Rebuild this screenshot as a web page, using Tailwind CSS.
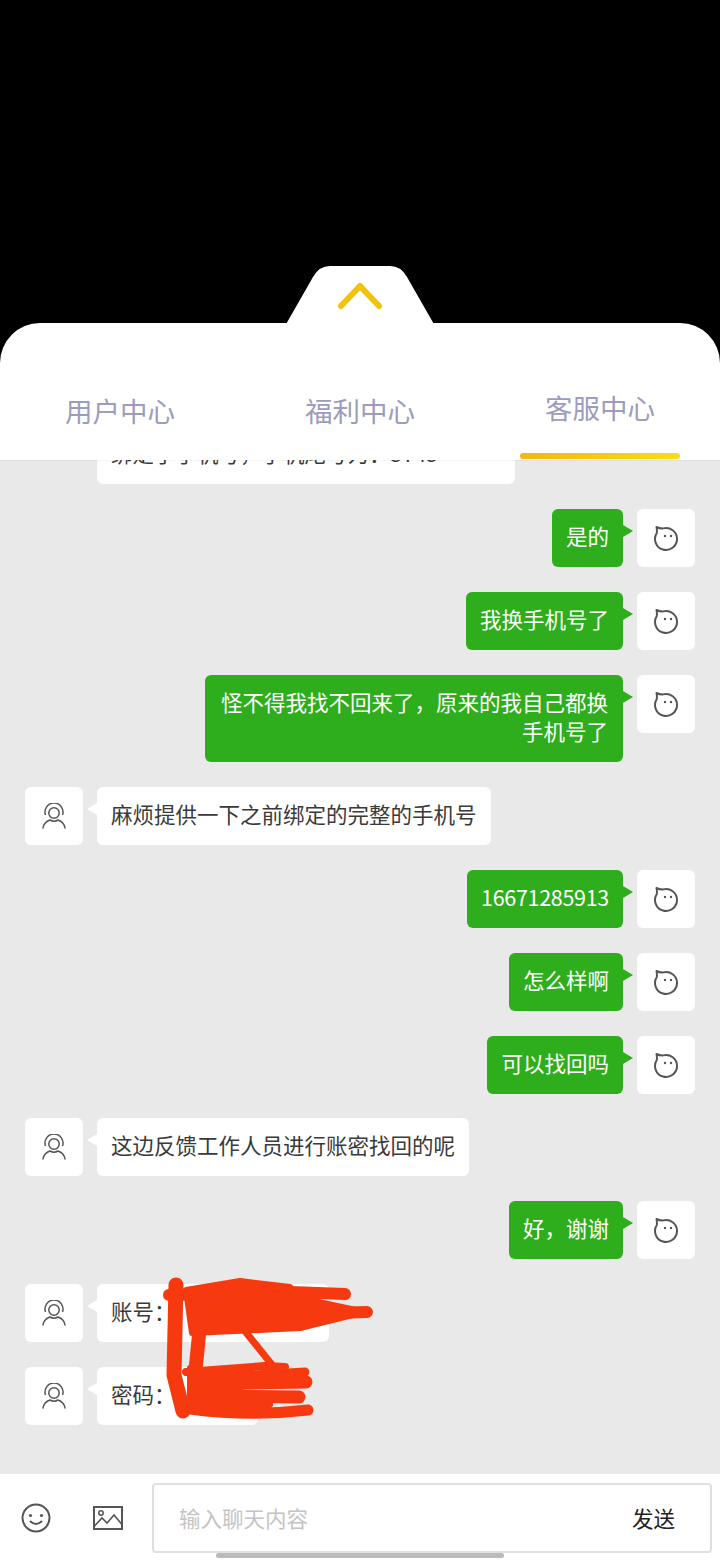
<!DOCTYPE html>
<html lang="zh">
<head>
<meta charset="utf-8">
<script src="https://cdn.jsdelivr.net/npm/@tailwindcss/browser@4"></script>
</head>
<body class="bg-black">
<div class="relative flex flex-col w-[720px] h-[1560px] overflow-hidden bg-black font-['Noto_Sans_CJK_SC','Noto_Sans',sans-serif] font-normal">
  <div class="relative h-[323px] shrink-0">
    <svg class="absolute left-[280px] top-[266px] w-[160px] h-[60px]" viewBox="0 0 160 60">
      <path d="M5 60 L33 11 Q39 0 50 0 L110 0 Q121 0 127 11 L155 60 Z" fill="#fff"/>
      <path d="M61 40 L80 20 L99 40" fill="none" stroke="#f0c30f" stroke-width="6" stroke-linecap="round" stroke-linejoin="round"/>
    </svg>
  </div>
  <header class="relative z-10 h-[137px] shrink-0 bg-white rounded-t-[40px] grid grid-cols-3 text-[27.5px] leading-[40px] text-[#9c9cbc] shadow-[0_1px_1px_rgba(0,0,0,0.04)]">
    <div class="flex justify-center pt-[67px]">用户中心</div>
    <div class="flex justify-center pt-[67px]">福利中心</div>
    <div class="relative flex justify-center pt-[64px]">客服中心
      <div class="absolute left-[40px] bottom-[1px] w-[160px] h-[6px] rounded-full bg-gradient-to-r from-[#eeb911] to-[#fbdc14]"></div>
    </div>
  </header>
  <main class="flex-1 overflow-hidden bg-[#e9e9e9] px-[25px] text-[21.5px] leading-[29.5px] text-[#3a3a3a]">
    <div class="flex flex-col gap-[24.9px] -mt-[33.7px]">

      <div class="flex gap-[14px] items-start">
        <div class="w-[58px] h-[58px] shrink-0"></div>
        <div class="relative bg-white rounded-[6px] px-[14px] pt-[12px] pb-[16.5px] whitespace-nowrap w-[418px]">绑定了手机号，手机尾号为：5745</div>
      </div>

      <div class="flex gap-[14px] justify-end items-start">
        <div class="relative bg-[#2eae1c] text-white rounded-[6px] px-[14px] pt-[12px] pb-[16.5px]">是的
          <span class="absolute left-full top-[16px] border-y-[6px] border-y-transparent border-l-[10px] border-l-[#2eae1c]"></span></div>
        <div class="w-[58px] h-[58px] shrink-0 bg-white rounded-[6px] flex items-center justify-center">
          <svg class="w-[28px] h-[28px]" viewBox="0 0 28 28" fill="none" stroke="#555" stroke-width="2" stroke-linejoin="round"><path d="M4.8 9 A11 11 0 1 0 11 4.4 Q7.5 4.5 4.5 3 Q5.2 6 4.8 9 Z"/><circle cx="13" cy="12" r="1.2" fill="#555" stroke="none"/><circle cx="19" cy="12" r="1.2" fill="#555" stroke="none"/></svg>
        </div>
      </div>

      <div class="flex gap-[14px] justify-end items-start">
        <div class="relative bg-[#2eae1c] text-white rounded-[6px] px-[14px] pt-[12px] pb-[16.5px]">我换手机号了
          <span class="absolute left-full top-[16px] border-y-[6px] border-y-transparent border-l-[10px] border-l-[#2eae1c]"></span></div>
        <div class="w-[58px] h-[58px] shrink-0 bg-white rounded-[6px] flex items-center justify-center">
          <svg class="w-[28px] h-[28px]" viewBox="0 0 28 28" fill="none" stroke="#555" stroke-width="2" stroke-linejoin="round"><path d="M4.8 9 A11 11 0 1 0 11 4.4 Q7.5 4.5 4.5 3 Q5.2 6 4.8 9 Z"/><circle cx="13" cy="12" r="1.2" fill="#555" stroke="none"/><circle cx="19" cy="12" r="1.2" fill="#555" stroke="none"/></svg>
        </div>
      </div>

      <div class="flex gap-[14px] justify-end items-start">
        <div class="relative bg-[#2eae1c] text-white rounded-[6px] px-[15px] pt-[12px] pb-[16px] w-[418px] text-right">怪不得我找不回来了，原来的我自己都换手机号了
          <span class="absolute left-full top-[16px] border-y-[6px] border-y-transparent border-l-[10px] border-l-[#2eae1c]"></span></div>
        <div class="w-[58px] h-[58px] shrink-0 bg-white rounded-[6px] flex items-center justify-center">
          <svg class="w-[28px] h-[28px]" viewBox="0 0 28 28" fill="none" stroke="#555" stroke-width="2" stroke-linejoin="round"><path d="M4.8 9 A11 11 0 1 0 11 4.4 Q7.5 4.5 4.5 3 Q5.2 6 4.8 9 Z"/><circle cx="13" cy="12" r="1.2" fill="#555" stroke="none"/><circle cx="19" cy="12" r="1.2" fill="#555" stroke="none"/></svg>
        </div>
      </div>

      <div class="flex gap-[14px] items-start">
        <div class="w-[58px] h-[58px] shrink-0 bg-white rounded-[6px] flex items-center justify-center">
          <svg class="w-[26px] h-[26px]" viewBox="0 0 26 26" fill="none" stroke="#555" stroke-width="1.5"><circle cx="13" cy="10" r="5.2"/><path d="M4.5 12 A9 9 0 1 1 21.5 12"/><path d="M2 25 Q3 19 9 17 Q13 19.5 17 17 Q23 19 24 25" stroke-linecap="round"/></svg>
        </div>
        <div class="relative bg-white rounded-[6px] px-[14px] pt-[12px] pb-[16.5px]">麻烦提供一下之前绑定的完整的手机号
          <span class="absolute right-full top-[16px] border-y-[6px] border-y-transparent border-r-[10px] border-r-white"></span></div>
      </div>

      <div class="flex gap-[14px] justify-end items-start">
        <div class="relative bg-[#2eae1c] text-white rounded-[6px] px-[14px] pt-[12px] pb-[16.5px] tracking-[-0.3px]">16671285913
          <span class="absolute left-full top-[16px] border-y-[6px] border-y-transparent border-l-[10px] border-l-[#2eae1c]"></span></div>
        <div class="w-[58px] h-[58px] shrink-0 bg-white rounded-[6px] flex items-center justify-center">
          <svg class="w-[28px] h-[28px]" viewBox="0 0 28 28" fill="none" stroke="#555" stroke-width="2" stroke-linejoin="round"><path d="M4.8 9 A11 11 0 1 0 11 4.4 Q7.5 4.5 4.5 3 Q5.2 6 4.8 9 Z"/><circle cx="13" cy="12" r="1.2" fill="#555" stroke="none"/><circle cx="19" cy="12" r="1.2" fill="#555" stroke="none"/></svg>
        </div>
      </div>

      <div class="flex gap-[14px] justify-end items-start">
        <div class="relative bg-[#2eae1c] text-white rounded-[6px] px-[14px] pt-[12px] pb-[16.5px]">怎么样啊
          <span class="absolute left-full top-[16px] border-y-[6px] border-y-transparent border-l-[10px] border-l-[#2eae1c]"></span></div>
        <div class="w-[58px] h-[58px] shrink-0 bg-white rounded-[6px] flex items-center justify-center">
          <svg class="w-[28px] h-[28px]" viewBox="0 0 28 28" fill="none" stroke="#555" stroke-width="2" stroke-linejoin="round"><path d="M4.8 9 A11 11 0 1 0 11 4.4 Q7.5 4.5 4.5 3 Q5.2 6 4.8 9 Z"/><circle cx="13" cy="12" r="1.2" fill="#555" stroke="none"/><circle cx="19" cy="12" r="1.2" fill="#555" stroke="none"/></svg>
        </div>
      </div>

      <div class="flex gap-[14px] justify-end items-start">
        <div class="relative bg-[#2eae1c] text-white rounded-[6px] px-[14px] pt-[12px] pb-[16.5px]">可以找回吗
          <span class="absolute left-full top-[16px] border-y-[6px] border-y-transparent border-l-[10px] border-l-[#2eae1c]"></span></div>
        <div class="w-[58px] h-[58px] shrink-0 bg-white rounded-[6px] flex items-center justify-center">
          <svg class="w-[28px] h-[28px]" viewBox="0 0 28 28" fill="none" stroke="#555" stroke-width="2" stroke-linejoin="round"><path d="M4.8 9 A11 11 0 1 0 11 4.4 Q7.5 4.5 4.5 3 Q5.2 6 4.8 9 Z"/><circle cx="13" cy="12" r="1.2" fill="#555" stroke="none"/><circle cx="19" cy="12" r="1.2" fill="#555" stroke="none"/></svg>
        </div>
      </div>

      <div class="flex gap-[14px] items-start">
        <div class="w-[58px] h-[58px] shrink-0 bg-white rounded-[6px] flex items-center justify-center">
          <svg class="w-[26px] h-[26px]" viewBox="0 0 26 26" fill="none" stroke="#555" stroke-width="1.5"><circle cx="13" cy="10" r="5.2"/><path d="M4.5 12 A9 9 0 1 1 21.5 12"/><path d="M2 25 Q3 19 9 17 Q13 19.5 17 17 Q23 19 24 25" stroke-linecap="round"/></svg>
        </div>
        <div class="relative bg-white rounded-[6px] px-[14px] pt-[12px] pb-[16.5px]">这边反馈工作人员进行账密找回的呢
          <span class="absolute right-full top-[16px] border-y-[6px] border-y-transparent border-r-[10px] border-r-white"></span></div>
      </div>

      <div class="flex gap-[14px] justify-end items-start">
        <div class="relative bg-[#2eae1c] text-white rounded-[6px] px-[14px] pt-[12px] pb-[16.5px]">好，谢谢
          <span class="absolute left-full top-[16px] border-y-[6px] border-y-transparent border-l-[10px] border-l-[#2eae1c]"></span></div>
        <div class="w-[58px] h-[58px] shrink-0 bg-white rounded-[6px] flex items-center justify-center">
          <svg class="w-[28px] h-[28px]" viewBox="0 0 28 28" fill="none" stroke="#555" stroke-width="2" stroke-linejoin="round"><path d="M4.8 9 A11 11 0 1 0 11 4.4 Q7.5 4.5 4.5 3 Q5.2 6 4.8 9 Z"/><circle cx="13" cy="12" r="1.2" fill="#555" stroke="none"/><circle cx="19" cy="12" r="1.2" fill="#555" stroke="none"/></svg>
        </div>
      </div>

      <div class="flex gap-[14px] items-start">
        <div class="w-[58px] h-[58px] shrink-0 bg-white rounded-[6px] flex items-center justify-center">
          <svg class="w-[26px] h-[26px]" viewBox="0 0 26 26" fill="none" stroke="#555" stroke-width="1.5"><circle cx="13" cy="10" r="5.2"/><path d="M4.5 12 A9 9 0 1 1 21.5 12"/><path d="M2 25 Q3 19 9 17 Q13 19.5 17 17 Q23 19 24 25" stroke-linecap="round"/></svg>
        </div>
        <div class="relative bg-white rounded-[6px] px-[14px] pt-[12px] pb-[16.5px] w-[232px]">账号：
          <span class="absolute right-full top-[16px] border-y-[6px] border-y-transparent border-r-[10px] border-r-white"></span></div>
      </div>

      <div class="flex gap-[14px] items-start">
        <div class="w-[58px] h-[58px] shrink-0 bg-white rounded-[6px] flex items-center justify-center">
          <svg class="w-[26px] h-[26px]" viewBox="0 0 26 26" fill="none" stroke="#555" stroke-width="1.5"><circle cx="13" cy="10" r="5.2"/><path d="M4.5 12 A9 9 0 1 1 21.5 12"/><path d="M2 25 Q3 19 9 17 Q13 19.5 17 17 Q23 19 24 25" stroke-linecap="round"/></svg>
        </div>
        <div class="relative bg-white rounded-[6px] px-[14px] pt-[12px] pb-[16.5px] w-[161px]">密码：
          <span class="absolute right-full top-[16px] border-y-[6px] border-y-transparent border-r-[10px] border-r-white"></span></div>
      </div>
    </div>
  </main>
  <footer class="h-[86px] shrink-0 bg-white flex items-start pt-[9px] pr-[8px]">
    <div class="w-[72px] h-[70px] flex items-center justify-center">
      <svg class="w-[30px] h-[30px]" viewBox="0 0 30 30" fill="none" stroke="#555" stroke-width="2"><circle cx="15" cy="15" r="13.5"/><circle cx="9.5" cy="12.5" r="1.6" fill="#555" stroke="none"/><circle cx="20.5" cy="12.5" r="1.6" fill="#555" stroke="none"/><path d="M9.5 18.5 Q15 23.5 20.5 18.5" stroke-linecap="round"/></svg>
    </div>
    <div class="w-[72px] h-[70px] flex items-center justify-center">
      <svg class="w-[30px] h-[24px]" viewBox="0 0 30 24" fill="none" stroke="#555" stroke-width="2"><rect x="1" y="1" width="28" height="22"/><circle cx="8" cy="7" r="2.2" stroke-width="1.5"/><path d="M1.5 20 L9 12 L14 17 L21 9 L28.5 18" stroke-width="1.6"/></svg>
    </div>
    <div class="ml-[8px] flex-1 h-[70px] border-2 border-[#e0e0e0] rounded-[4px] flex items-center justify-between pl-[25px] pr-[35px]">
      <span class="text-[21.5px] text-[#c4c4c4]">输入聊天内容</span>
      <span class="text-[21.5px] text-[#222]">发送</span>
    </div>
  </footer>
  <div class="absolute left-[216px] bottom-[2px] w-[288px] h-[5px] bg-[#bbb] rounded-full"></div>
  <svg class="absolute left-0 top-0 w-[720px] h-[1560px] pointer-events-none" viewBox="0 0 720 1560" fill="none" stroke="#f7390f" stroke-linecap="round" stroke-linejoin="round">
    <path d="M186 1290 L240 1281 L290 1287 L300 1298 L365 1312 L300 1328 L192 1333 Z" fill="#f7390f" stroke-width="6"/>
    <path d="M169 1295 L290 1292 L345 1294" stroke-width="12"/>
    <path d="M300 1314 L367 1312" stroke-width="12"/>
    <path d="M176 1285 L174 1375 L183 1411" stroke-width="15"/>
    <path d="M200 1325 L195 1375" stroke-width="14"/>
    <path d="M240 1325 L273 1366" stroke-width="7"/>
    <path d="M186 1372 L265 1366 L285 1367" stroke-width="8"/>
    <path d="M190 1368 L270 1405 L190 1405 Z" fill="#f7390f" stroke-width="6"/>
    <path d="M200 1378 L305 1372" stroke-width="9"/>
    <path d="M195 1384 L306 1382" stroke-width="13"/>
    <path d="M195 1396 L299 1397" stroke-width="13"/>
    <path d="M190 1409 Q250 1417 308 1410" stroke-width="11"/>
  </svg>
</div>
</body>
</html>
